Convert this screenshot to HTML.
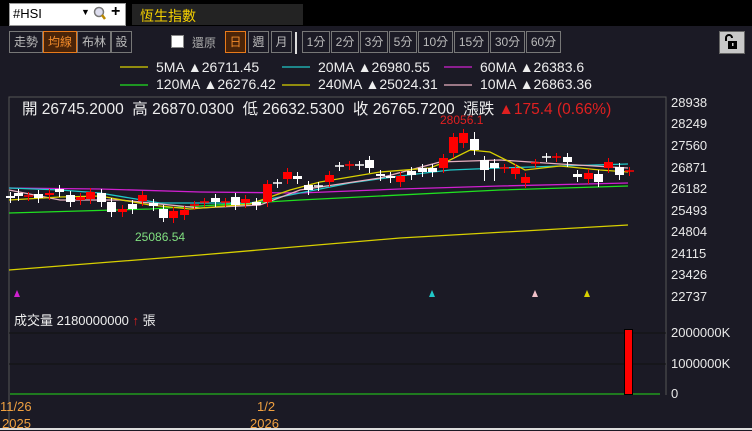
<!DOCTYPE html><html><head><meta charset="utf-8"><style>
body{margin:0;width:752px;height:430px;overflow:hidden;background:#1b1a25;font-family:"Liberation Sans","Noto Sans CJK TC",sans-serif;position:relative}
.a{position:absolute;white-space:nowrap}
.b{position:absolute;top:31px;height:20px;border:1px solid #777;color:#bbb;font-size:12px;line-height:20px;text-align:center;box-sizing:content-box}
.o{border-color:#e87a1a;background:#4a2408;color:#f08a2a}
.ax{position:absolute;left:671px;color:#e8e8e8;font-size:13px}
.lg{position:absolute;font-size:14px;color:#eee;white-space:nowrap}
</style></head><body>
<div class="a" style="left:0;top:0;width:752px;height:26px;background:#000"></div>
<div class="a" style="left:9px;top:3px;width:115px;height:21px;background:#fff;border:1px solid #999"></div>
<div class="a" style="left:13px;top:6px;font-size:13px;color:#000">#HSI</div>
<div class="a" style="left:81px;top:7px;font-size:9px;color:#000">▼</div>
<svg class="a" style="left:93px;top:6px" width="14" height="16"><circle cx="6" cy="6" r="4.5" fill="#dde" stroke="#777" stroke-width="1.5"/><line x1="9" y1="9" x2="12" y2="13" stroke="#b80" stroke-width="2.5"/></svg>
<div class="a" style="left:111px;top:3px;font-size:16px;font-weight:bold;color:#000">+</div>
<div class="a" style="left:132px;top:4px;width:171px;height:21px;background:#232323"></div>
<div class="a" style="left:140px;top:6px;font-size:14px;color:#f5d000">恆生指數</div>
<div class="b" style="left:9px;width:32px">走勢</div>
<div class="b o" style="left:43px;width:32px">均線</div>
<div class="b" style="left:77px;width:32px">布林</div>
<div class="b" style="left:111px;width:19px">設</div>
<div class="a" style="left:171px;top:35px;width:11px;height:11px;background:#fff;border:1px solid #888"></div>
<div class="a" style="left:192px;top:34px;font-size:12px;color:#aaa">還原</div>
<div class="b o" style="left:225px;width:19px">日</div>
<div class="b" style="left:248px;width:19px">週</div>
<div class="b" style="left:271px;width:19px">月</div>
<div class="a" style="left:295px;top:32px;width:2px;height:22px;background:#ddd"></div>
<div class="b" style="left:302px;width:26px">1分</div>
<div class="b" style="left:331px;width:26px">2分</div>
<div class="b" style="left:360px;width:26px">3分</div>
<div class="b" style="left:389px;width:26px">5分</div>
<div class="b" style="left:418px;width:33px">10分</div>
<div class="b" style="left:454px;width:33px">15分</div>
<div class="b" style="left:490px;width:33px">30分</div>
<div class="b" style="left:526px;width:33px">60分</div>
<div class="a" style="left:719px;top:31px;width:24px;height:21px;background:#c8c8c8;border:1px solid #666"></div>
<svg class="a" style="left:723px;top:33px" width="16" height="17"><path d="M3 8V5a3 3 0 0 1 6 0" fill="none" stroke="#000" stroke-width="2"/><rect x="5" y="8" width="9" height="8" fill="#000"/><rect x="9" y="10" width="1.5" height="3" fill="#ccc"/></svg>
<div class="a" style="left:0;top:57px;width:752px;height:373px;background:#1b1a25"></div>
<svg class="a" style="left:0;top:0" width="752" height="430">
<g stroke-width="1.3">
<line x1="120" y1="67" x2="148" y2="67" stroke="#d8d000"/><line x1="282" y1="67" x2="310" y2="67" stroke="#20c8c8"/><line x1="444" y1="67" x2="472" y2="67" stroke="#d020d0"/>
<line x1="120" y1="85" x2="148" y2="85" stroke="#20e020"/><line x1="282" y1="85" x2="310" y2="85" stroke="#d8d000"/><line x1="444" y1="85" x2="472" y2="85" stroke="#e8b0c0"/>
</g>
<path d="M9 430V97H666V395" fill="none" stroke="#555"/>
<line x1="9" y1="333" x2="666" y2="333" stroke="#111"/><line x1="9" y1="364" x2="666" y2="364" stroke="#111"/>
<line x1="10" y1="394" x2="660" y2="394" stroke="#1f7a1f" stroke-width="2"/>
<g fill="none" stroke-width="1.3">
<polyline stroke="#d8d000" points="9,270 200,255 400,238 628,225"/>
<polyline stroke="#20e020" points="9,213 150,209 300,200 500,190 628,186"/>
<polyline stroke="#d020d0" points="9,188 100,189 200,192 300,193 400,189 500,186 628,183"/>
<polyline stroke="#20c8c8" points="9,188 60,190 100,193 160,203 250,203 300,193 350,183 400,176 450,170 500,168 560,166 628,164"/>
<polyline stroke="#e8b0c0" points="9,190 60,200 120,200 200,208 260,205 300,190 380,178 440,162 500,160 560,164 628,168"/>
<polyline stroke="#d8d000" points="9,200 60,197 100,196 150,205 190,209 250,204 290,190 320,182 380,172 430,168 450,160 470,150 490,152 510,162 525,170 560,166 600,170 628,172"/>
</g>
<g id="c"></g>
<polygon points="14,297 17,290 20,297" fill="#d020d0"/><polygon points="429,297 432,290 435,297" fill="#20c8c8"/><polygon points="532,297 535,290 538,297" fill="#f0c0c8"/><polygon points="584,297 587,290 590,297" fill="#d8d000"/>
<rect x="624.5" y="329.5" width="8" height="65" fill="#f00" stroke="#000"/>
<rect x="0" y="428" width="752" height="2" fill="#ddd"/>
</svg>
<script>
var d=[[10,196,198,'w'],[18,193,196,'w'],[28,196,196,'r'],[38,194,198,'w'],[49,193,195,'r'],[59,189,192,'w'],[70,195,202,'w'],[80,197,200,'r'],[90,192,199,'r'],[101,193,202,'w'],[111,202,212,'w'],[122,209,212,'r'],[132,204,209,'w'],[142,195,201,'r'],[153,203,206,'w'],[163,209,218,'w'],[173,211,218,'r'],[184,210,215,'r'],[194,205,205,'r'],[204,202,202,'r'],[215,198,202,'w'],[225,202,202,'r'],[235,197,205,'w'],[245,199,203,'r'],[256,202,205,'w'],[267,184,202,'r'],[277,183,183,'w'],[287,172,179,'r'],[297,176,179,'w'],[308,185,190,'w'],[318,186,186,'w'],[329,175,182,'r'],[339,166,166,'w'],[349,165,165,'r'],[359,165,165,'w'],[369,160,168,'w'],[380,174,176,'w'],[390,176,178,'w'],[400,176,182,'r'],[411,171,175,'w'],[422,168,172,'w'],[432,168,172,'w'],[443,158,168,'r'],[453,137,153,'r'],[463,133,143,'r'],[474,139,150,'w'],[484,160,170,'w'],[494,163,168,'w'],[504,168,168,'r'],[515,168,174,'r'],[525,177,183,'r'],[535,163,163,'r'],[546,157,157,'w'],[556,157,157,'r'],[567,157,162,'w'],[577,174,177,'w'],[588,173,179,'r'],[598,174,182,'w'],[608,162,168,'r'],[619,167,175,'w'],[629,171,171,'r']];
var s='';d.forEach(function(c){var col=c[3]=='w'?'#fff':'#f00';var lo=c[1]-4,hi=c[2]+5;if(c[0]==474)lo=132;if(c[0]==484||c[0]==494)hi=181;if(c[0]==163)hi=222;
s+='<line x1="'+(c[0]+.5)+'" y1="'+lo+'" x2="'+(c[0]+.5)+'" y2="'+hi+'" stroke="'+col+'"/>';
if(c[2]-c[1]<1)s+='<line x1="'+(c[0]-4)+'" y1="'+c[1]+'" x2="'+(c[0]+5)+'" y2="'+c[1]+'" stroke="'+col+'" stroke-width="1.5"/>';
else s+='<rect x="'+(c[0]-4)+'" y="'+c[1]+'" width="9" height="'+(c[2]-c[1])+'" fill="'+col+'"/>';});
document.getElementById('c').innerHTML=s;
</script>
<div class="lg" style="left:156px;top:59px">5MA ▲26711.45</div>
<div class="lg" style="left:318px;top:59px">20MA ▲26980.55</div>
<div class="lg" style="left:480px;top:59px">60MA ▲26383.6</div>
<div class="lg" style="left:156px;top:76px">120MA ▲26276.42</div>
<div class="lg" style="left:318px;top:76px">240MA ▲25024.31</div>
<div class="lg" style="left:480px;top:76px">10MA ▲26863.36</div>
<div class="a" style="left:22px;top:97px;font-size:15.5px;color:#eee">開 26745.2000&nbsp; 高 26870.0300&nbsp; 低 26632.5300&nbsp; 收 26765.7200&nbsp; 漲跌 <span style="color:#e02020">▲175.4 (0.66%)</span></div>
<div class="a" style="left:440px;top:113px;font-size:12px;color:#e02020">28056.1</div>
<div class="a" style="left:135px;top:230px;font-size:12px;color:#80e080">25086.54</div>
<div class="ax" style="top:95px">28938</div><div class="ax" style="top:116px">28249</div><div class="ax" style="top:138px">27560</div><div class="ax" style="top:160px">26871</div><div class="ax" style="top:181px">26182</div><div class="ax" style="top:203px">25493</div><div class="ax" style="top:224px">24804</div><div class="ax" style="top:246px">24115</div><div class="ax" style="top:267px">23426</div><div class="ax" style="top:289px">22737</div>
<div class="ax" style="top:325px">2000000K</div><div class="ax" style="top:356px">1000000K</div><div class="ax" style="top:386px">0</div>
<div class="a" style="left:14px;top:310px;font-size:13px;color:#eee">成交量 2180000000 <span style="color:#e02020">↑</span> 張</div>
<div class="a" style="left:0;top:399px;font-size:13px;color:#f0a040">11/26</div>
<div class="a" style="left:257px;top:399px;font-size:13px;color:#f0a040">1/2</div>
<div class="a" style="left:2px;top:416px;font-size:13px;color:#f0a040">2025</div>
<div class="a" style="left:250px;top:416px;font-size:13px;color:#f0a040">2026</div>
</body></html>
